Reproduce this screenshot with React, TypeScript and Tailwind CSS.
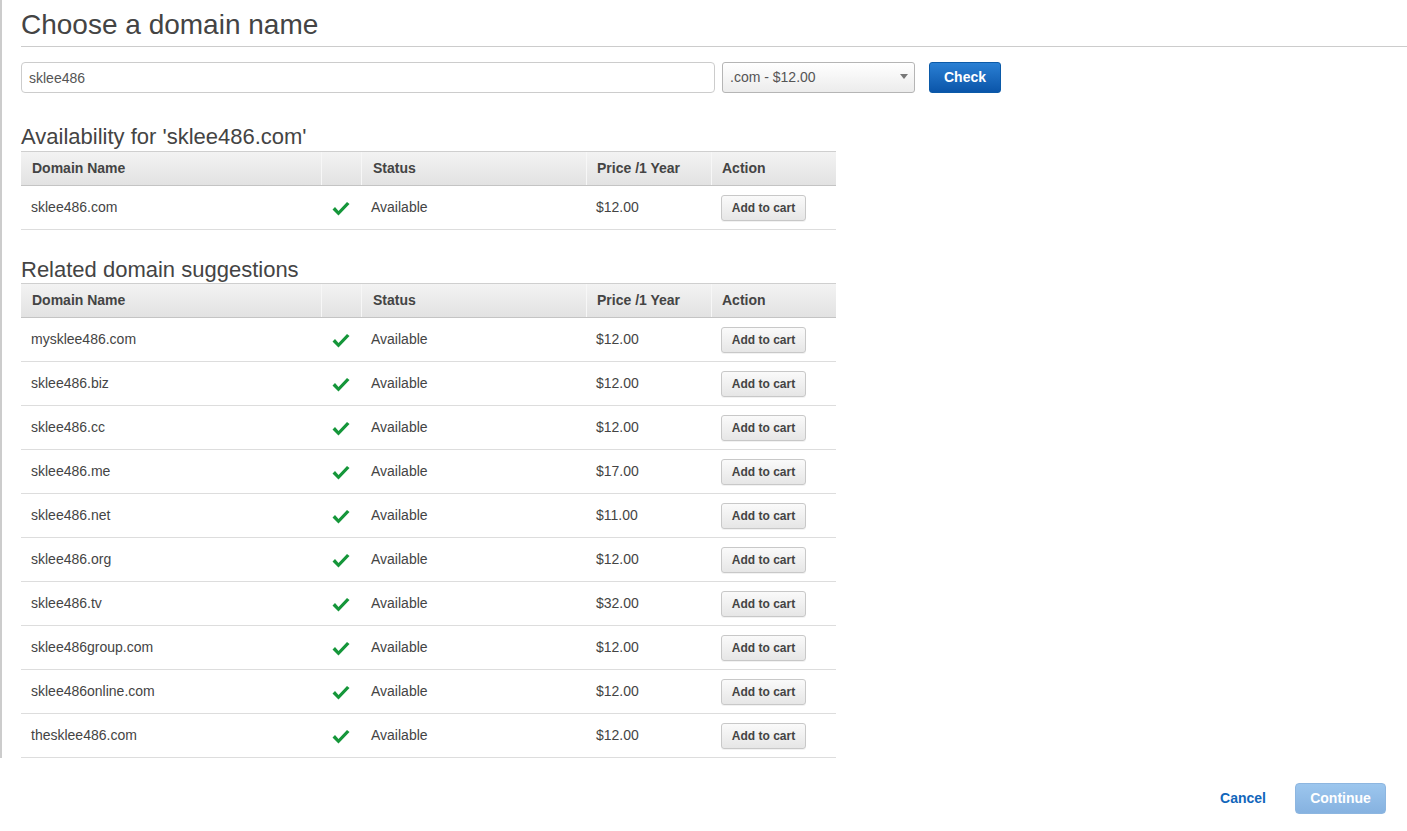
import React from "react";

type Suggestion = { name: string; price: string };

const available: Suggestion[] = [{ name: "sklee486.com", price: "$12.00" }];

const related: Suggestion[] = [
  { name: "mysklee486.com", price: "$12.00" },
  { name: "sklee486.biz", price: "$12.00" },
  { name: "sklee486.cc", price: "$12.00" },
  { name: "sklee486.me", price: "$17.00" },
  { name: "sklee486.net", price: "$11.00" },
  { name: "sklee486.org", price: "$12.00" },
  { name: "sklee486.tv", price: "$32.00" },
  { name: "sklee486group.com", price: "$12.00" },
  { name: "sklee486online.com", price: "$12.00" },
  { name: "thesklee486.com", price: "$12.00" },
];

function CheckMark() {
  return (
    <svg width="18" height="16" viewBox="0 0 18 16">
      <path d="M0.5 8.5 L6.5 14.5 L17.5 3 L15 1 L6.5 10 L3 6 Z" fill="#15963a" />
    </svg>
  );
}

function DomainTable({ rows }: { rows: Suggestion[] }) {
  return (
    <div className="w-[815px]">
      {/* header */}
      <div className="flex h-[35px] border-t border-b border-t-[#cfcfcf] border-b-[#c4c4c4] bg-gradient-to-b from-[#f3f3f3] to-[#e2e2e2] text-[14px] font-bold text-[#444]">
        <div className="w-[300px] flex items-center pl-[11px]">Domain Name</div>
        <div className="w-[40px] border-l border-[#f7f7f7]"></div>
        <div className="w-[225px] flex items-center pl-[11px] border-l border-[#f7f7f7]">Status</div>
        <div className="w-[125px] flex items-center pl-[10px] border-l border-[#f7f7f7]">Price /1 Year</div>
        <div className="w-[125px] flex items-center pl-[10px] border-l border-[#f7f7f7]">Action</div>
      </div>
      {rows.map((row) => (
        <div
          key={row.name}
          className="flex h-[44px] items-center border-b border-[#dddddd] text-[14px] text-[#444]"
        >
          <div className="w-[300px] pl-[10px]">{row.name}</div>
          <div className="w-[40px] flex justify-center pt-[3px]">
            <CheckMark />
          </div>
          <div className="w-[225px] pl-[10px]">Available</div>
          <div className="w-[125px] pl-[10px]">{row.price}</div>
          <div className="w-[125px] pl-[10px]">
            <button className="h-[26px] w-[85px] rounded-[3px] border border-[#c8c8c8] bg-gradient-to-b from-[#fafafa] to-[#e6e6e6] text-[12px] font-bold text-[#444] shadow-[0_1px_0_rgba(0,0,0,0.05)]">
              Add to cart
            </button>
          </div>
        </div>
      ))}
    </div>
  );
}

export default function App() {
  return (
    <div
      className="w-[1407px] h-[831px] bg-white text-[#444]"
      style={{ fontFamily: "'Liberation Sans', Arial, sans-serif" }}
    >
      {/* 본문 영역, 왼쪽 회색 세로줄 */}
      <div className="border-l-2 border-[#cccccc] pl-[19px]">
        <h1 className="pt-[9px] pb-[5px] text-[28px] leading-[32px] font-normal text-[#444] border-b border-[#cccccc]">
          Choose a domain name
        </h1>

        {/* 검색 영역 */}
        <div className="mt-[15px] flex items-center">
          <input
            className="h-[31px] w-[694px] rounded-[4px] border border-[#cccccc] px-[7px] text-[14px] text-[#555] outline-none"
            defaultValue="sklee486"
          />
          <div className="ml-[7px] relative flex h-[31px] w-[193px] items-center rounded-[3px] border border-[#b5b5b5] bg-gradient-to-b from-[#ffffff] to-[#ececec] pl-[7px] text-[14px] text-[#555]">
            .com - $12.00
            <span className="absolute right-[6px] top-[11px] h-0 w-0 border-l-[4px] border-r-[4px] border-t-[5px] border-l-transparent border-r-transparent border-t-[#777]"></span>
          </div>
          <button className="ml-[14px] h-[31px] w-[72px] rounded-[3px] border border-[#0b5aa8] bg-gradient-to-b from-[#2a80d4] to-[#0a55a9] text-[14px] font-bold text-white">
            Check
          </button>
        </div>

        <h2 className="mt-[31px] mb-[2px] text-[22px] leading-[25px] font-normal text-[#444]">
          Availability for 'sklee486.com'
        </h2>
        <DomainTable rows={available} />

        <h2 className="mt-[27px] mb-[1px] text-[22px] leading-[25px] font-normal text-[#444]">
          Related domain suggestions
        </h2>
        <DomainTable rows={related} />
      </div>

      {/* 하단 버튼 */}
      <div className="mt-[25px] flex items-center justify-end pr-[21px]">
        <span className="mr-[29px] text-[14px] font-bold text-[#1166bb]">Cancel</span>
        <button className="h-[31px] w-[91px] rounded-[4px] border border-[#8db6e0] bg-gradient-to-b from-[#9cc6ee] to-[#86b2e0] text-[14px] font-bold text-white">
          Continue
        </button>
      </div>
    </div>
  );
}
